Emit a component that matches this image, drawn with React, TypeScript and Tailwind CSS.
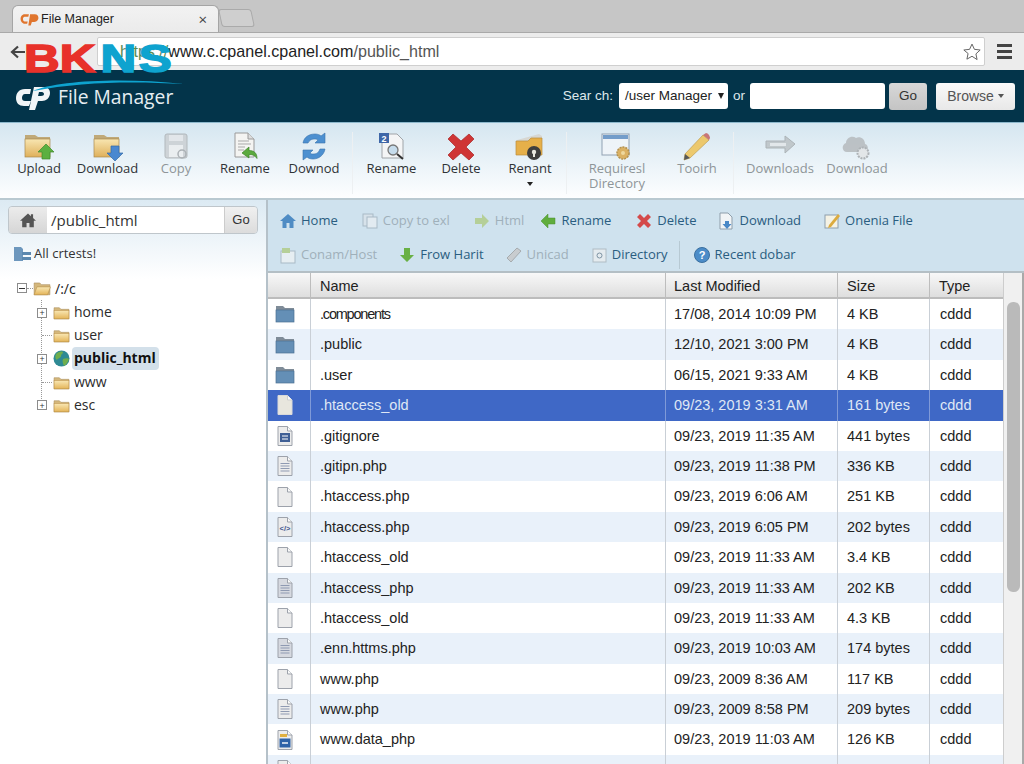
import React from "react";

const Folder = ({ s = 18, open = false }: { s?: number; open?: boolean }) => (
  <svg width={s} height={s} viewBox="0 0 32 32">
    <defs>
      <linearGradient id="fg" x1="0" y1="0" x2="0" y2="1">
        <stop offset="0" stopColor="#f9e8b5" />
        <stop offset="1" stopColor="#e4b458" />
      </linearGradient>
    </defs>
    <path d="M2 7h10l3 3h15v18H2z" fill="#d4b77c" stroke="#a98a55" strokeWidth="1" />
    {open ? (
      <path d="M7 14h24l-5 14H2z" fill="url(#fg)" stroke="#b88e45" strokeWidth="1" />
    ) : (
      <rect x="2" y="12" width="28" height="16" fill="url(#fg)" stroke="#b88e45" strokeWidth="1" />
    )}
  </svg>
);

const BlueFolder = () => (
  <svg width="20" height="20" viewBox="0 0 20 20">
    <path d="M1 2h7l2 2h9v14H1z" fill="#7f8c98" />
    <rect x="1" y="6" width="18" height="12" fill="#648fb6" stroke="#4b6f92" strokeWidth="0.7" />
  </svg>
);

const FileIcon = ({ kind = "plain", sel = false }: { kind?: string; sel?: boolean }) => (
  <svg width="20" height="22" viewBox="0 0 20 22">
    <path
      d="M3 1.500h9.500l4.500 4.500v14.500H3z"
      fill={sel ? "#e8e6de" : kind === "shade" ? "#d6d9e0" : "#ececec"}
      stroke={sel ? "#d9d9d9" : "#9da2ab"}
    />
    <path d="M12.500 1.500v4.500h4.500" fill="#fafafa" stroke={sel ? "#cfcfcf" : "#9da2ab"} />
    {(kind === "lines" || kind === "shade") && (
      <path d="M5.500 8.500h9M5.500 11h9M5.500 13.500h9M5.500 16h9" stroke="#8f9ab2" strokeWidth="1" />
    )}
    {kind === "form" && (
      <>
        <rect x="5" y="8" width="10" height="9" fill="#3f5f95" />
        <path d="M7 11h6M7 14h6" stroke="#fff" strokeWidth="1" />
      </>
    )}
    {kind === "code" && (
      <text x="10" y="15" textAnchor="middle" fontSize="7.500" fontWeight="700" fill="#40568f" fontFamily="Liberation Sans, sans-serif">
        &lt;/&gt;
      </text>
    )}
    {kind === "data" && (
      <>
        <rect x="5" y="5" width="7" height="3" fill="#e0b040" />
        <rect x="4.500" y="9.500" width="11" height="9" fill="#2f63a8" />
        <path d="M7 14h6" stroke="#fff" strokeWidth="1.400" />
      </>
    )}
  </svg>
);

const Wrap = ({ children }: { children: React.ReactNode }) => (
  <svg width="34" height="30" viewBox="0 0 34 30">
    {children}
  </svg>
);

const BigFolder = () => (
  <>
    <defs>
      <linearGradient id="bf" x1="0" y1="0" x2="0" y2="1">
        <stop offset="0" stopColor="#f8e6b2" />
        <stop offset="1" stopColor="#dfb05a" />
      </linearGradient>
    </defs>
    <path d="M3 3h10l3 2h12v20H3z" fill="#c0a978" />
    <rect x="3" y="7" width="25" height="18" fill="url(#bf)" stroke="#a8894f" strokeWidth="0.7" />
  </>
);

const IcoUpload = () => (
  <Wrap>
    <BigFolder />
    <path d="M24 12l8 8h-4v7h-8v-7h-4z" fill="#5cb040" stroke="#3f8a2c" strokeWidth="0.7" />
  </Wrap>
);
const IcoDownload = () => (
  <Wrap>
    <BigFolder />
    <path d="M20 14h8v7h4l-8 8-8-8h4z" fill="#4a88d0" stroke="#336aa8" strokeWidth="0.7" />
  </Wrap>
);
const IcoCopy = () => (
  <Wrap>
    <rect x="6" y="2" width="22" height="24" rx="2" fill="#c9cdd0" stroke="#a8adb0" />
    <rect x="10" y="3" width="14" height="6" fill="#e4e6e8" />
    <rect x="10" y="13" width="14" height="12" fill="#eceeef" />
    <circle cx="23" cy="22" r="4" fill="none" stroke="#9ea3a6" strokeWidth="1.500" />
  </Wrap>
);
const IcoRename = () => (
  <Wrap>
    <path d="M7 1h13l6 6v18H7z" fill="#f4f4f2" stroke="#9a9a9a" />
    <path d="M20 1v6h6" fill="#ddd" stroke="#9a9a9a" />
    <path d="M10 9h11M10 12h13M10 15h7M10 18h6" stroke="#a9a9a9" />
    <path d="M14 21l7-6v3.500c5 0 8 2.500 8 8-2-3-4-4-8-4V26z" fill="#5aaa3e" stroke="#3d8428" strokeWidth="0.7" />
  </Wrap>
);
const IcoRefresh = () => (
  <Wrap>
    <path d="M6 11c1-6 6-9 12-9 3 0 5 1 6 2l4-3v10H18l3-3c-1-1-2-1-4-1-3 0-5 2-6 4z" fill="#4d90d0" stroke="#3a74ac" strokeWidth="0.6" />
    <path d="M28 17c-1 6-6 10-12 10-3 0-5-1-6-2l-4 3V18h10l-3 3c1 1 2 1 4 1 3 0 5-2 6-5z" fill="#4d90d0" stroke="#3a74ac" strokeWidth="0.6" />
  </Wrap>
);
const IcoSearchDoc = () => (
  <Wrap>
    <path d="M7 2h15l6 6v18H7z" fill="#f4f5f6" stroke="#a0a4a8" />
    <rect x="4" y="1" width="10" height="10" fill="#3f67a8" />
    <text x="9" y="9.500" textAnchor="middle" fontSize="9" fontWeight="700" fill="#fff" fontFamily="Liberation Sans, sans-serif">2</text>
    <circle cx="18" cy="18" r="5" fill="#c6dcec" stroke="#777" strokeWidth="1.300" />
    <path d="M22 22l6 5" stroke="#333" strokeWidth="2" />
  </Wrap>
);
const IcoDelete = () => (
  <Wrap>
    <path d="M4 7l5-5 8 7 8-7 5 5-8 8 8 8-5 5-8-7-8 7-5-5 8-8z" fill="#cf3535" stroke="#a82525" strokeWidth="0.7" />
  </Wrap>
);
const IcoKeyFolder = () => (
  <Wrap>
    <path d="M4 8l22-6 3 2v8H4z" fill="#d7d7d2" />
    <path d="M3 9h12l3-3h11v17H3z" fill="#e6b04a" stroke="#b98e3d" strokeWidth="0.7" />
    <circle cx="21" cy="21" r="7" fill="#3e3e3e" />
    <circle cx="21" cy="20" r="2.200" fill="#e8e8e0" />
    <rect x="20" y="21" width="2" height="4" fill="#e8e8e0" />
  </Wrap>
);
const IcoWindow = () => (
  <Wrap>
    <rect x="2" y="2" width="27" height="21" fill="#f2f6fa" stroke="#7f8fa3" />
    <rect x="3" y="3" width="25" height="4" fill="#5a8ac0" />
    <circle cx="23" cy="21" r="6" fill="#d9a23f" stroke="#a87a25" strokeWidth="1.500" strokeDasharray="2 1" />
    <circle cx="23" cy="21" r="2" fill="#f1d38a" />
  </Wrap>
);
const IcoPencil = () => (
  <Wrap>
    <path d="M5 22L23 3l6 5-19 18-6 2z" fill="#efc04c" stroke="#b88a28" strokeWidth="0.7" />
    <path d="M23 3l3-2c2 0 4 3 4 5l-1 2z" fill="#c45a5a" />
    <path d="M4 28l1-6 5 4z" fill="#333" />
  </Wrap>
);
const IcoGrayArrow = () => (
  <Wrap>
    <path d="M3 9h19V4l10 8-10 9v-5H3z" fill="#b9bfc2" stroke="#a0a6a9" />
    <rect x="7" y="11" width="16" height="3" fill="#e3e6e8" />
  </Wrap>
);
const IcoCloud = () => (
  <Wrap>
    <path d="M7 20c-5 0-6-7-1-9 0-5 6-8 10-5 4-2 9 1 9 6 4 1 4 8-1 8z" fill="#b3b7ba" />
    <circle cx="23" cy="21" r="5.500" fill="#e2e4e5" stroke="#a0a4a7" strokeWidth="2" strokeDasharray="2 1" />
  </Wrap>
);

const Tool = ({ w, icon, label, dim, caret }: { w: string; icon: React.ReactNode; label: React.ReactNode; dim?: boolean; caret?: boolean }) => (
  <div className={`${w} flex flex-col items-center shrink-0`}>
    <div className={`h-[30px] ${dim ? "opacity-80" : ""}`}>{icon}</div>
    <div className={`-mt-[1px] text-center text-[13px] leading-[15px] whitespace-nowrap ${dim ? "text-[#8e9598]" : "text-[#2f3336]"}`}>{label}</div>
    {caret && <div className="mt-[6px] w-0 h-0 border-x-[3px] border-x-transparent border-t-[4px] border-t-[#222]" />}
  </div>
);

const Sep = () => <div className="w-px h-[62px] bg-[#c3cdd2] shrink-0 border-r border-white/70" />;

const mini = (d: React.ReactNode) => (
  <svg width="18" height="18" viewBox="0 0 18 18">
    {d}
  </svg>
);

const Act = ({ icon, label, dim, cls }: { icon: React.ReactNode; label: string; dim?: boolean; cls: string }) => (
  <div className={`${cls} flex items-center gap-[4px] shrink-0 whitespace-nowrap text-[13px] ${dim ? "text-[#9fb0ba]" : "text-[#2a5d80]"}`}>
    {icon}
    <span>{label}</span>
  </div>
);

const rows: [string, string, string, string][] = [
  ["b", ".components", "17/08, 2014 10:09 PM", "4 KB"],
  ["b", ".public", "12/10, 2021 3:00 PM", "4 KB"],
  ["b", ".user", "06/15, 2021 9:33 AM", "4 KB"],
  ["plain", ".htaccess_old", "09/23, 2019 3:31 AM", "161 bytes"],
  ["form", ".gitignore", "09/23, 2019 11:35 AM", "441 bytes"],
  ["lines", ".gitipn.php", "09/23, 2019 11:38 PM", "336 KB"],
  ["plain", ".htaccess.php", "09/23, 2019 6:06 AM", "251 KB"],
  ["code", ".htaccess.php", "09/23, 2019 6:05 PM", "202 bytes"],
  ["plain", ".htaccess_old", "09/23, 2019 11:33 AM", "3.4 KB"],
  ["shade", ".htaccess_php", "09/23, 2019 11:33 AM", "202 KB"],
  ["plain", ".htaccess_old", "09/23, 2019 11:33 AM", "4.3 KB"],
  ["shade", ".enn.httms.php", "09/23, 2019 10:03 AM", "174 bytes"],
  ["plain", "www.php", "09/23, 2009 8:36 AM", "117 KB"],
  ["lines", "www.php", "09/23, 2009 8:58 PM", "209 bytes"],
  ["data", "www.data_php", "09/23, 2019 11:03 AM", "126 KB"],
  ["plain", "www.data.php", "09/23, 2019 11:03 AM", "24.1 KB"],
];

const TreeRow = ({ plus, icon, label, active }: { plus: boolean; icon: React.ReactNode; label: string; active?: boolean }) => (
  <div className="h-[23.2px] flex items-center -ml-[5px] shrink-0">
    <div className="w-[16px] shrink-0 flex items-center">
      {plus ? (
        <div className="w-[10px] h-[10px] border border-[#8c8c8c] bg-white flex items-center justify-center text-[9px] leading-none text-[#333]">+</div>
      ) : (
        <div className="ml-[5px] w-[10px] border-t border-dotted border-[#999]" />
      )}
    </div>
    {icon}
    <div className={`ml-[2px] pl-[2px] pr-[3px] h-[23px] leading-[22px] text-[14px] rounded-sm ${active ? "bg-[#d3e0ea] font-bold text-[#111]" : "text-[#2b2b2b]"}`}>{label}</div>
  </div>
);

export default function App() {
  const sans = "font-['Open_Sans',sans-serif]";
  const arial = "font-['Liberation_Sans',Arial,sans-serif]";
  return (
    <div className={`relative w-[1024px] h-[764px] overflow-hidden bg-white ${sans}`}>
      {/* Browser tab strip */}
      <div className="h-[33px] bg-[#c6c6c6] flex items-end pl-[12px] border-b border-[#a9a9a9]">
        <div className="w-[207px] h-[27px] bg-gradient-to-b from-[#f2f2f2] to-[#ebebeb] rounded-t-[6px] border border-b-0 border-[#a5a5a5] flex items-center pl-[7px] pr-[11px]">
          <svg width="19" height="14" viewBox="0 0 32 22">
            <path d="M15 3H8C3 3 1 7 1 11s3 8 7 8h4l1-4H8c-2 0-3-2-3-4s1-4 3-4h6z" fill="#e0752e" />
            <path d="M17 3h8c4 0 6 3 6 6s-2 7-7 7h-4l-2 6h-4z" fill="#e0752e" />
          </svg>
          <span className={`ml-[2px] text-[12.500px] text-[#222] ${arial}`}>File Manager</span>
          <span className="ml-auto text-[15px] leading-none text-[#444]">×</span>
        </div>
        <div className="ml-[1px] w-[33px] h-[18px] mb-[5px] rounded-[3px] border border-[#aaa] bg-[#cfcfcf] skew-x-12" />
      </div>

      {/* Address row */}
      <div className="h-[37px] bg-[#ececec] flex items-center pl-[10px] pr-[10px]">
        <svg width="16" height="14" viewBox="0 0 16 14" className="shrink-0">
          <path d="M15 7H3M8 1.500L2 7l6 5.500" fill="none" stroke="#444" strokeWidth="2.200" />
        </svg>
        <div className="ml-[71px] w-[888px] h-[29px] bg-white border border-[#cfcfcf] rounded-[2px] flex items-center shrink-0 pl-[22px] pr-[2px]">
          <span className={`text-[16.100px] text-[#222] ${arial}`}>
            <span className="text-[#5f8a52]">https://</span>www.c.cpanel.cpanel.com<span className="text-[#555]">/public_html</span>
          </span>
          <svg width="20" height="20" viewBox="0 0 24 24" className="ml-auto" fill="none" stroke="#666" strokeWidth="1.200">
            <path d="M12 2.500l2.900 6.300 6.900.8-5.100 4.700 1.400 6.800L12 17.100l-6.100 3.500 1.400-6.800L2.200 9.600l6.900-.8z" />
          </svg>
        </div>
        <div className="ml-[12px] flex flex-col gap-[3px] shrink-0">
          <div className="w-[15px] h-[3px] bg-[#444]" />
          <div className="w-[15px] h-[3px] bg-[#444]" />
          <div className="w-[15px] h-[3px] bg-[#444]" />
        </div>
      </div>

      {/* cPanel header */}
      <div className="h-[53px] bg-[#03344a] flex items-center pl-[15px] pr-[9px] border-b border-[#8db8cc]">
        <svg width="36" height="26" viewBox="0 0 36 26" className="shrink-0 mt-[3px]">
          <path d="M16 4H10C4 4 1 8 1 13s3 8 8 8h5l2-5h-6c-2 0-3-1-3-3s1-4 3-4h5z" fill="#f1f5f7" />
          <path d="M19 2h10c4 0 6 3 6 6 0 5-4 8-8 8h-4l-3 9h-6z M24 7l-1 4h3c2 0 3-1 3-2s-1-2-2-2z" fill="#f1f5f7" fillRule="evenodd" />
        </svg>
        <span className="ml-[7px] mt-[3px] text-[19.300px] text-[#e6eef2]">File Manager</span>
        <div className={`ml-auto flex items-center text-[13.500px] ${arial}`}>
          <span className="text-[#dfe8ec]">Sear ch:</span>
          <div className="ml-[6px] w-[109px] h-[26px] bg-white rounded-[3px] flex items-center pl-[6px] text-[#222]">
            /user Manager
            <span className="ml-[6px] w-0 h-0 border-x-[3.500px] border-x-transparent border-t-[6px] border-t-[#222]" />
          </div>
          <span className="ml-[5px] text-[#dfe8ec]">or</span>
          <div className="ml-[5px] w-[135px] h-[26px] bg-white rounded-[3px]" />
          <div className="ml-[4px] w-[38px] h-[27px] rounded-[3px] bg-gradient-to-b from-[#d8d8d8] to-[#c4c4c4] flex items-center justify-center text-[#333]">Go</div>
          <div className="ml-[9px] w-[79px] h-[27px] rounded-[3px] bg-gradient-to-b from-[#fafafa] to-[#e8e8e8] flex items-center justify-center text-[#555] text-[14px]">
            Browse
            <span className="ml-[4px] w-0 h-0 border-x-[3px] border-x-transparent border-t-[4px] border-t-[#555]" />
          </div>
        </div>
      </div>

      {/* Toolbar */}
      <div className="h-[77px] bg-gradient-to-b from-[#d5e6f0] to-[#fdfeff] flex items-start pt-[9px] pl-[5px] border-b-2 border-[#b9c9d1]">
        <Tool w="w-[68px]" icon={<IcoUpload />} label="Upload" />
        <Tool w="w-[69px]" icon={<IcoDownload />} label="Download" />
        <Tool w="w-[68px]" icon={<IcoCopy />} label="Copy" dim />
        <Tool w="w-[70px]" icon={<IcoRename />} label="Rename" />
        <Tool w="w-[68px]" icon={<IcoRefresh />} label="Downod" />
        <div className="ml-[4px] mr-[4px]"><Sep /></div>
        <Tool w="w-[69px]" icon={<IcoSearchDoc />} label="Rename" />
        <Tool w="w-[70px]" icon={<IcoDelete />} label="Delete" />
        <Tool w="w-[68px]" icon={<IcoKeyFolder />} label="Renant" caret />
        <div className="ml-[2px] mr-[3px]"><Sep /></div>
        <Tool w="w-[94px]" icon={<IcoWindow />} label={<>Requiresl<br />Directory</>} dim />
        <Tool w="w-[66px]" icon={<IcoPencil />} label="Tooirh" dim />
        <div className="ml-[3px] mr-[3px]"><Sep /></div>
        <Tool w="w-[86px]" icon={<IcoGrayArrow />} label="Downloads" dim />
        <Tool w="w-[68px]" icon={<IcoCloud />} label="Download" dim />
      </div>

      <div className="flex h-[564px]">
        {/* Left tree panel */}
        <div className="w-[268px] shrink-0 bg-gradient-to-b from-[#dceaf3] via-white via-[14%] to-white border-r-2 border-[#b5c1c9] pt-[6px]">
          <div className="ml-[8px] w-[250px] h-[28px] flex rounded-[4px] border border-[#bfc6cb] overflow-hidden">
            <div className="w-[38px] bg-gradient-to-b from-[#ececec] to-[#d6d6d6] flex items-center justify-center">
              <svg width="18" height="16" viewBox="0 0 24 22" fill="#555">
                <path d="M12 2L1 12h3v9h6v-6h4v6h6v-9h3l-4-3.600V3h-3v2.700z" />
              </svg>
            </div>
            <div className="flex-1 bg-white flex items-center pl-[4px] text-[15px] text-[#333]">/public_html</div>
            <div className={`w-[33px] bg-gradient-to-b from-[#f0f0f0] to-[#dcdcdc] border-l border-[#ccc] flex items-center justify-center text-[13px] text-[#333] ${arial}`}>Go</div>
          </div>
          <div className="ml-[13px] mt-[9px] h-[22px] flex items-center text-[13px] text-[#333]">
            <svg width="19" height="18" viewBox="0 0 19 18">
              <path d="M1 2h7l2 2v12H1z" fill="#6d97bd" />
              <rect x="9" y="7" width="9" height="3" fill="#5a87ae" />
              <rect x="9" y="12" width="9" height="3" fill="#5a87ae" />
            </svg>
            <span className="ml-[2px]">All crtests!</span>
          </div>
          <div className="mt-[11px] ml-[17px] h-[24px] flex items-center">
            <div className="w-[10px] h-[10px] border border-[#8c8c8c] bg-white flex items-center justify-center">
              <div className="w-[6px] h-px bg-[#333]" />
            </div>
            <div className="w-[6px] border-t border-dotted border-[#999]" />
            <Folder s={18} open />
            <span className="ml-[4px] text-[14px] text-[#222]">/:/c</span>
          </div>
          <div className="ml-[41px] h-[105px] border-l border-dotted border-[#999] flex flex-col pt-[1px]">
            <TreeRow plus icon={<Folder s={17} />} label="home" />
            <TreeRow plus={false} icon={<Folder s={17} />} label="user" />
            <TreeRow
              plus
              icon={
                <svg width="17" height="17" viewBox="0 0 17 17">
                  <circle cx="8.500" cy="8.500" r="8" fill="#2f8a94" />
                  <path d="M3 4c2-2 5-3 7-2 0 2-2 2-2 4s-3 2-4 4c-2-1-2-4-1-6zM10 9c2-1 5-1 6 0-1 3-3 6-5 7-1-2-2-5-1-7z" fill="#6fae4d" />
                </svg>
              }
              label="public_html"
              active
            />
            <TreeRow plus={false} icon={<Folder s={17} />} label="www" />
            <TreeRow plus icon={<Folder s={17} />} label="esc" />
          </div>
        </div>

        {/* Right panel */}
        <div className="flex-1 min-w-0 flex flex-col">
          <div className="h-[73px] shrink-0 bg-[#cfe2ee] border-b-2 border-[#b4bfc5] pl-[11px] pt-[11px]">
            <div className="h-[19px] flex items-center">
              <Act cls="mr-[23px]" label="Home" icon={mini(<path d="M9 2L1 9h2.500v7h4v-5h3v5h4V9H17z" fill="#4f8cc4" />)} />
              <Act cls="mr-[23px]" dim label="Copy to exl" icon={mini(<><rect x="2" y="2" width="10" height="12" fill="#d7e2ea" stroke="#a9bac6" /><rect x="6" y="5" width="10" height="11" fill="#e2ebf1" stroke="#a9bac6" /></>)} />
              <Act cls="mr-[15px]" dim label="Html" icon={mini(<path d="M2 6h7V2l7 7-7 7v-4H2z" fill="#b5cf98" />)} />
              <Act cls="mr-[24px]" label="Rename" icon={mini(<path d="M16 6H9V2L2 9l7 7v-4h7z" fill="#60ad3d" stroke="#4b8f2c" strokeWidth="0.500" />)} />
              <Act cls="mr-[21px]" label="Delete" icon={mini(<path d="M2 5l3-3 4 4 4-4 3 3-4 4 4 4-3 3-4-4-4 4-3-3 4-4z" fill="#d44a4a" />)} />
              <Act cls="mr-[22px]" label="Download" icon={mini(<><path d="M3 1h8l4 4v12H3z" fill="#f1f4f6" stroke="#8e9eab" /><path d="M8 9h4v3h2.500L10 17l-4.500-5H8z" fill="#4a88c6" /></>)} />
              <Act cls="" label="Onenia File" icon={mini(<><rect x="2" y="3" width="13" height="13" fill="#f5f2e4" stroke="#8e9eab" /><path d="M6 13L15 2l2 2-9 11-3 1z" fill="#dcab3e" /></>)} />
            </div>
            <div className="mt-[15px] h-[19px] flex items-center">
              <Act cls="mr-[21px]" dim label="Conam/Host" icon={mini(<><rect x="2" y="5" width="14" height="12" fill="#e6eef2" stroke="#a9bac6" /><rect x="3" y="2" width="8" height="5" fill="#b5cf98" /></>)} />
              <Act cls="mr-[21px]" label="Frow Harit" icon={mini(<path d="M6 2h6v7h4l-7 7-7-7h4z" fill="#69b045" />)} />
              <Act cls="mr-[21px]" dim label="Unicad" icon={mini(<path d="M2 12L12 2l4 3L6 16z" fill="#c8cccf" stroke="#a6abae" />)} />
              <Act cls="mr-[11px]" label="Directory" icon={mini(<><rect x="3" y="3" width="13" height="13" fill="#e4ebef" stroke="#b0bcc4" /><circle cx="9.500" cy="9.500" r="2.500" fill="none" stroke="#7d93a3" /></>)} />
              <div className="w-px h-[28px] bg-[#b7c9d3] mr-[13px] shrink-0" />
              <Act cls="" label="Recent dobar" icon={mini(<><circle cx="9" cy="9" r="7.500" fill="#4b8cc8" stroke="#3a6f9f" /><text x="9" y="13" textAnchor="middle" fontSize="11" fontWeight="700" fill="#fff" fontFamily="Liberation Sans, sans-serif">?</text></>)} />
            </div>
          </div>

          <div className={`flex flex-1 min-h-0 text-[14.500px] text-[#222] ${arial}`}>
            <div className="w-[735px] shrink-0 overflow-hidden">
              <div className="h-[26px] grid grid-cols-[43px_355px_172px_92px_73px] bg-gradient-to-b from-[#f8f8f8] to-[#dedede] border-b-2 border-[#bcbcbc]">
                <div className="border-r border-[#bdbdbd]" />
                <div className="pl-[9px] leading-[27px] border-r border-[#bdbdbd]">Name</div>
                <div className="pl-[8px] leading-[27px] border-r border-[#bdbdbd]">Last Modified</div>
                <div className="pl-[9px] leading-[27px] border-r border-[#bdbdbd]">Size</div>
                <div className="pl-[9px] leading-[27px]">Type</div>
              </div>
              {rows.map((r, i) => {
                const sel = i === 3;
                const bg = sel ? "bg-[#3f68c6] text-[#dfe7f5]" : i % 2 === 1 ? "bg-[#e9f1fa]" : "bg-white";
                const bc = sel ? "border-[#7f9ad8]" : "border-[#c9cfd6]";
                return (
                  <div key={i} className={`h-[30.400px] leading-[30px] grid grid-cols-[43px_355px_172px_92px_73px] ${bg}`}>
                    <div className={`pl-[7px] flex items-center border-r ${bc}`}>
                      {r[0] === "b" ? <BlueFolder /> : <FileIcon kind={r[0]} sel={sel} />}
                    </div>
                    <div className={`pl-[9px] border-r ${bc} ${i === 0 ? "tracking-[-1.200px]" : ""}`}>{r[1]}</div>
                    <div className={`pl-[8px] border-r ${bc}`}>{r[2]}</div>
                    <div className={`pl-[9px] border-r ${bc}`}>{r[3]}</div>
                    <div className="pl-[10px]">cddd</div>
                  </div>
                );
              })}
            </div>
            <div className="flex-1 bg-[#f0f0f0] border-l border-[#cdcdcd] border-r-2 border-r-[#a9a9a9] pl-[3px] pt-[29px]">
              <div className="w-[13px] h-[290px] rounded-[6px] bg-[#bababa]" />
            </div>
          </div>
        </div>
      </div>

      {/* BKNS watermark logo, laid over the page */}
      <div className="absolute left-[24px] top-[40px] h-[52px] w-[160px] pointer-events-none">
        <div className="origin-left scale-x-[1.3] font-['Liberation_Sans',sans-serif] font-bold text-[38px] leading-[39px] whitespace-nowrap">
          <span className="text-[#e8312a] [-webkit-text-stroke:1.500px_#e8312a]">BK</span>
          <span className="ml-[4px] tracking-[2px] text-[#0ea3cf] [-webkit-text-stroke:1.500px_#0ea3cf]">NS</span>
        </div>
        <svg width="155" height="14" viewBox="0 0 155 14" className="absolute left-[6px] top-[38px]">
          <path d="M3 13C25 3 90-1 154 6 100 3 50 4 3 13z" fill="#0ea3cf" />
        </svg>
      </div>
    </div>
  );
}
